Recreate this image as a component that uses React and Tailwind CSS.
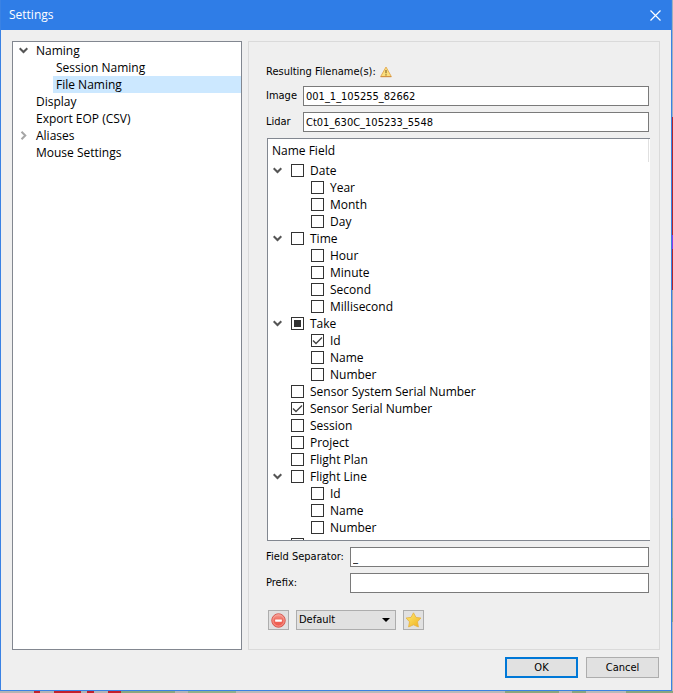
import { useState } from "react";

const navItems = [
  { id: "naming", label: "Naming", arrow: "open" },
  { id: "session-naming", label: "Session Naming", child: true },
  { id: "file-naming", label: "File Naming", child: true },
  { id: "display", label: "Display" },
  { id: "export-eop", label: "Export EOP (CSV)" },
  { id: "aliases", label: "Aliases", arrow: "closed" },
  { id: "mouse", label: "Mouse Settings" },
];

const nameFields = [
  { id: "date", label: "Date", children: ["Year", "Month", "Day"] },
  { id: "time", label: "Time", children: ["Hour", "Minute", "Second", "Millisecond"] },
  { id: "take", label: "Take", children: ["Id", "Name", "Number"] },
  { id: "sensor-system", label: "Sensor System Serial Number" },
  { id: "sensor", label: "Sensor Serial Number" },
  { id: "session", label: "Session" },
  { id: "project", label: "Project" },
  { id: "flight-plan", label: "Flight Plan" },
  { id: "flight-line", label: "Flight Line", children: ["Id", "Name", "Number"] },
  { id: "custom", label: "" },
];

const Chevron = ({ open }) => (
  <svg
    width="9"
    height="9"
    viewBox="0 0 9 9"
    fill="none"
    strokeWidth="2"
    className={open ? "stroke-[#555555]" : "stroke-[#a6a6a6]"}
  >
    <path d={open ? "M0.7 2.2L4.5 6L8.3 2.2" : "M2.5 0.7L6.3 4.5L2.5 8.3"} />
  </svg>
);

const WarningIcon = () => (
  <svg width="12" height="12" viewBox="0 0 12 12" role="img" aria-label="Warning">
    <path d="M6 1L11.3 10.5H0.7Z" fill="#fbdf7c" stroke="#e3ae5c" strokeLinejoin="round" />
    <path d="M0.7 10.7H11.3" stroke="#d08c3c" />
    <path d="M6 4V7.3" stroke="#8a6a28" strokeWidth="1.2" />
    <path d="M6 8.2V9.4" stroke="#8a6a28" strokeWidth="1.2" />
  </svg>
);

const RemoveIcon = () => (
  <svg width="15" height="15" viewBox="0 0 16 16">
    <defs>
      <linearGradient id="removeFill" x1="0" y1="0" x2="0" y2="1">
        <stop offset="0" stopColor="#f7a196" />
        <stop offset="0.5" stopColor="#ee6558" />
        <stop offset="1" stopColor="#f0584b" />
      </linearGradient>
    </defs>
    <circle cx="8" cy="8" r="7.2" fill="url(#removeFill)" stroke="#d4544c" strokeWidth="1" />
    <circle cx="8" cy="8" r="6" fill="none" stroke="#f8aca4" strokeWidth="0.8" />
    <rect x="4.4" y="6.8" width="7.2" height="2.4" rx="0.5" fill="#ffffff" />
  </svg>
);

const StarIcon = () => (
  <svg width="17" height="16" viewBox="0 0 16 16">
    <defs>
      <linearGradient id="starFill" x1="0" y1="0" x2="1" y2="1">
        <stop offset="0" stopColor="#ffec70" />
        <stop offset="1" stopColor="#f0b020" />
      </linearGradient>
    </defs>
    <path
      d="M8 0.8L10.5 5.4L15.4 6L12 9.8L12.9 15L8 12.8L3.1 15L4 9.8L0.6 6L5.5 5.4Z"
      fill="url(#starFill)"
      stroke="#e6b13e"
      strokeWidth="0.8"
      strokeLinejoin="round"
    />
  </svg>
);

const CheckBox = ({ id, label, state, onToggle }) => (
  <div className="flex items-center gap-1.5">
    <span className="grid size-[13px] shrink-0">
      <input
        id={id}
        type="checkbox"
        checked={state === "on"}
        onChange={onToggle}
        aria-label={label || "Custom"}
        className="col-start-1 row-start-1 size-[13px] appearance-none border border-[#333333] bg-white"
      />
      {state !== "off" && (
        <svg viewBox="0 0 13 13" className="pointer-events-none col-start-1 row-start-1 size-[13px]">
          {state === "on" ? (
            <path d="M2 6.5L5 9.5L11 3.5" fill="none" stroke="#444444" strokeWidth="1.4" />
          ) : (
            <rect x="3" y="3" width="7" height="7" fill="#333333" />
          )}
        </svg>
      )}
    </span>
    {label && (
      <label htmlFor={id} className="whitespace-nowrap">
        {label}
      </label>
    )}
  </div>
);

const TextField = ({ id, label, value, onChange, labelClass }) => (
  <div className="flex items-center">
    <label htmlFor={id} className={`shrink-0 ${labelClass}`}>
      {label}
    </label>
    <input
      id={id}
      type="text"
      value={value}
      onChange={(e) => onChange(e.target.value)}
      className="h-5 min-w-0 flex-1 border border-[#7a7a7a] bg-white px-0.5 outline-none"
    />
  </div>
);

const App = () => {
  const [selected, setSelected] = useState("file-naming");
  const [closed, setClosed] = useState({});
  const [checked, setChecked] = useState({ "take-Id": true, sensor: true });
  const [imageName, setImageName] = useState("001_1_105255_82662");
  const [lidarName, setLidarName] = useState("Ct01_630C_105233_5548");
  const [separator, setSeparator] = useState("_");
  const [prefix, setPrefix] = useState("");

  const toggle = (id) => setChecked((prev) => ({ ...prev, [id]: !prev[id] }));

  const parentState = (field) => {
    if (!field.children) return checked[field.id] ? "on" : "off";
    const count = field.children.filter((c) => checked[`${field.id}-${c}`]).length;
    if (count === 0) return "off";
    return count === field.children.length ? "on" : "mixed";
  };

  const toggleParent = (field) => {
    if (!field.children) return toggle(field.id);
    const next = parentState(field) !== "on";
    setChecked((prev) => ({
      ...prev,
      ...Object.fromEntries(field.children.map((c) => [`${field.id}-${c}`, next])),
    }));
  };

  return (
    <div className="grid h-screen grid-cols-[minmax(0,1fr)_1px] grid-rows-[minmax(0,1fr)_2px] text-black">
      <div className="flex flex-col border-x border-b border-[#3a82e4] bg-[#efefef] font-['DejaVu_Sans_Condensed','DejaVu_Sans',sans-serif] text-[11px] leading-4">
        {/* Title bar */}
        <header className="flex h-[30px] shrink-0 items-center justify-between bg-[#2f7de7] pr-2.5 pl-2 text-white">
          <h1 className="font-['Open_Sans',sans-serif] text-xs">Settings</h1>
          <button type="button" aria-label="Close">
            <svg width="11" height="11" viewBox="0 0 11 11" stroke="#ffffff" strokeWidth="1.2">
              <path d="M0.5 0.5L10.5 10.5M10.5 0.5L0.5 10.5" />
            </svg>
          </button>
        </header>

        <main className="flex min-h-0 flex-1 gap-1.5 px-[11px] pt-[11px]">
          {/* Category tree */}
          <nav className="w-[230px] shrink-0 border border-[#828790] bg-white font-['Open_Sans',sans-serif] text-xs leading-[17px]">
            {navItems.map((item) => (
              <div key={item.id} className={`flex h-[17px] ${item.child ? "pl-10" : "pl-5"}`}>
                {item.arrow && (
                  <span className="-ml-5 flex w-5 items-center justify-center">
                    <Chevron open={item.arrow === "open"} />
                  </span>
                )}
                <button
                  type="button"
                  onClick={() => setSelected(item.id)}
                  className={`flex-1 pl-[3px] text-left ${selected === item.id ? "bg-[#cce8ff]" : ""}`}
                >
                  {item.label}
                </button>
              </div>
            ))}
          </nav>

          {/* File naming page */}
          <section className="flex min-w-0 flex-1 flex-col border border-[#dadada] pt-5 pr-2.5 pb-[19px] pl-[17px]">
            <div className="flex h-5 items-center gap-1">
              <span>Resulting Filename(s):</span>
              <WarningIcon />
            </div>
            <div className="mt-1 flex flex-col gap-1.5">
              <TextField id="image" label="Image" value={imageName} onChange={setImageName} labelClass="w-[37px]" />
              <TextField id="lidar" label="Lidar" value={lidarName} onChange={setLidarName} labelClass="w-[37px]" />
            </div>

            <div className="mt-1.5 -mr-px ml-px min-h-0 flex-1 overflow-hidden border-y border-l border-[#828790] bg-white font-['Open_Sans',sans-serif] text-xs leading-[17px]">
              <div className="mr-px flex h-[23px] items-center border-r border-[#e0e0e0] pl-1">Name Field</div>
              {nameFields.map((field) => (
                <div key={field.id}>
                  <div className="flex h-[17px]">
                    <span className="flex w-[23px] shrink-0 items-center pl-[5px]">
                      {field.children && (
                        <button
                          type="button"
                          aria-label={`Expand ${field.label}`}
                          onClick={() => setClosed({ ...closed, [field.id]: !closed[field.id] })}
                        >
                          <Chevron open={!closed[field.id]} />
                        </button>
                      )}
                    </span>
                    <CheckBox
                      id={field.id}
                      label={field.label}
                      state={parentState(field)}
                      onToggle={() => toggleParent(field)}
                    />
                  </div>
                  {!closed[field.id] &&
                    field.children?.map((child) => {
                      const id = `${field.id}-${child}`;
                      return (
                        <div key={id} className="flex h-[17px] pl-[43px]">
                          <CheckBox
                            id={id}
                            label={child}
                            state={checked[id] ? "on" : "off"}
                            onToggle={() => toggle(id)}
                          />
                        </div>
                      );
                    })}
                </div>
              ))}
            </div>

            <div className="mt-1.5 flex flex-col gap-1.5">
              <TextField
                id="separator"
                label="Field Separator:"
                value={separator}
                onChange={setSeparator}
                labelClass="w-[84px]"
              />
              <TextField id="prefix" label="Prefix:" value={prefix} onChange={setPrefix} labelClass="w-[84px]" />
            </div>

            <div className="mt-[17px] flex gap-[7px] pl-0.5">
              <button
                type="button"
                aria-label="Remove preset"
                className="flex h-5 w-[21px] items-center justify-center border border-[#adadad] bg-[#e1e1e1]"
              >
                <RemoveIcon />
              </button>
              <div className="grid w-[100px]">
                <select
                  aria-label="Preset"
                  className="col-start-1 row-start-1 h-5 appearance-none border border-[#adadad] bg-[#e1e1e1] pl-0.5"
                >
                  <option>Default</option>
                </select>
                <svg
                  width="8"
                  height="4"
                  viewBox="0 0 8 4"
                  className="pointer-events-none col-start-1 row-start-1 mr-1.5 self-center justify-self-end"
                >
                  <path d="M0 0H8L4 4Z" />
                </svg>
              </div>
              <button
                type="button"
                aria-label="Favorite preset"
                className="flex h-5 w-[21px] items-center justify-center border border-[#adadad] bg-[#e1e1e1]"
              >
                <StarIcon />
              </button>
            </div>
          </section>
        </main>

        <footer className="flex shrink-0 justify-end gap-2 px-3 pt-[7px] pb-3">
          <button type="button" className="h-[21px] w-[73px] border-2 border-[#0078d7] bg-[#e1e1e1]">
            OK
          </button>
          <button type="button" className="h-[21px] w-[73px] border border-[#adadad] bg-[#e1e1e1]">
            Cancel
          </button>
        </footer>
      </div>

      {/* Map showing behind the dialog */}
      <div className="bg-[linear-gradient(#9fb0c0_0_17%,#b3262e_17%_34%,#8d3be0_34%_36%,#b3262e_36%_42%,#9aa5ad_42%_50%,#8fa3b0_50%_75%,#86a786_75%_90%,#b5b5b5_90%)]" />
      <div className="col-span-2 bg-[linear-gradient(90deg,#b4b4b4_0_5%,#c3202c_5%_6%,#b4b4b4_6%_8%,#c3202c_8%_12%,#b4b4b4_12%_13%,#c3202c_13%_14%,#b4b4b4_14%_16%,#c3202c_16%_18%,#8aa67f_18%_26%,#b4b4b4_26%_28%,#8fb08c_28%_35%,#bababa_35%_75%,#8aa67f_75%_83%,#bababa_83%_85%,#8aa67f_85%_87%,#bababa_87%_93%,#8aa67f_93%)]" />
    </div>
  );
};

export default App;
